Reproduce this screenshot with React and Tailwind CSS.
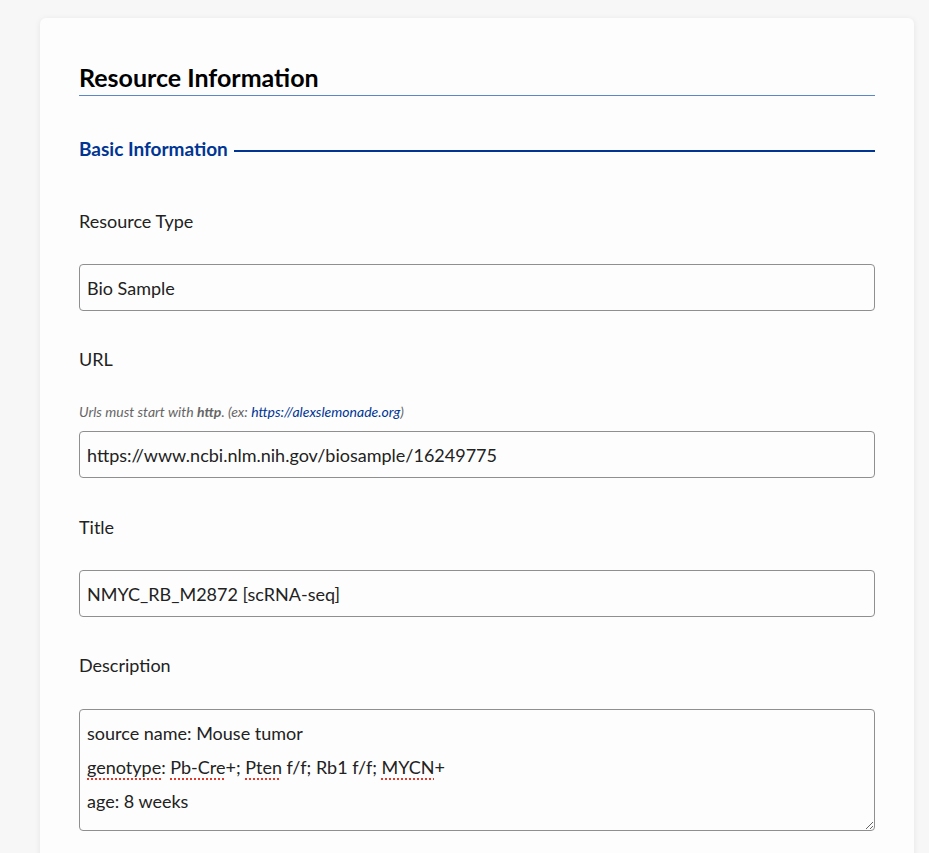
import React from 'react';

const font = { fontFamily: '"Lato", "Liberation Sans", sans-serif' };

function Field({ label, children, hint, gap = 'mb-[36px]' }) {
  return (
    <div className={gap}>
      <div className="text-[18px] leading-[24px] text-[#222]">{label}</div>
      {hint ? (
        <div className="mt-[32px] mb-[10px] text-[14px] leading-[18px] italic text-[#666]">{hint}</div>
      ) : (
        <div className="h-[31px]" />
      )}
      {children}
    </div>
  );
}

function TextInput({ value }) {
  return (
    <input
      readOnly
      value={value}
      className="block w-full h-[47px] rounded-[4px] border border-[#8f8f8f] bg-[#fdfdfd] px-[7px] text-[18px] text-[#222] outline-none"
      style={font}
    />
  );
}

function Typo({ children }) {
  return (
    <span className="underline decoration-dotted decoration-[#e0392b] decoration-2 underline-offset-[4px]">{children}</span>
  );
}

export default function App() {
  return (
    <div className="min-h-screen bg-[#f7f7f7] pt-[18px]" style={font}>
      <div className="ml-[40px] w-[874px] rounded-[6px] bg-[#fdfdfd] shadow-[0_1px_6px_rgba(0,0,0,0.08)] px-[39px] pt-[43px] pb-[40px]">
        <h1 className="text-[25px] leading-[32px] font-bold text-black pb-[2px] border-b border-[#5b86c8]">
          Resource Information
        </h1>

        <div className="mt-[41px] mb-[48px] flex items-center gap-[6px]">
          <h2 className="text-[19px] leading-[24px] font-bold text-[#003594] whitespace-nowrap">Basic Information</h2>
          <div className="flex-1 h-[2px] bg-[#003594] mt-[3px]" />
        </div>

        <Field label="Resource Type">
          <TextInput value="Bio Sample" />
        </Field>

        <Field
          label="URL"
          gap="mb-[37px]"
          hint={
            <>
              Urls must start with <b>http</b>. (ex: <span className="text-[#003594]">https://alexslemonade.org</span>)
            </>
          }
        >
          <TextInput value="https://www.ncbi.nlm.nih.gov/biosample/16249775" />
        </Field>

        <Field label="Title">
          <TextInput value="NMYC_RB_M2872 [scRNA-seq]" />
        </Field>

        <div>
          <div className="text-[18px] leading-[24px] text-[#222]">Description</div>
          <div className="h-[32px]" />
          <div className="h-[122px] w-full resize-y overflow-auto rounded-[4px] border border-[#8f8f8f] bg-[#fdfdfd] px-[7px] pt-[6px] text-[18px] leading-[34px] text-[#222]">
            <div>source name: Mouse tumor</div>
            <div>
              <Typo>genotype</Typo>: <Typo>Pb-Cre</Typo>+; <Typo>Pten</Typo> f/f; Rb1 f/f; <Typo>MYCN</Typo>+
            </div>
            <div>age: 8 weeks</div>
          </div>
        </div>
      </div>
    </div>
  );
}
